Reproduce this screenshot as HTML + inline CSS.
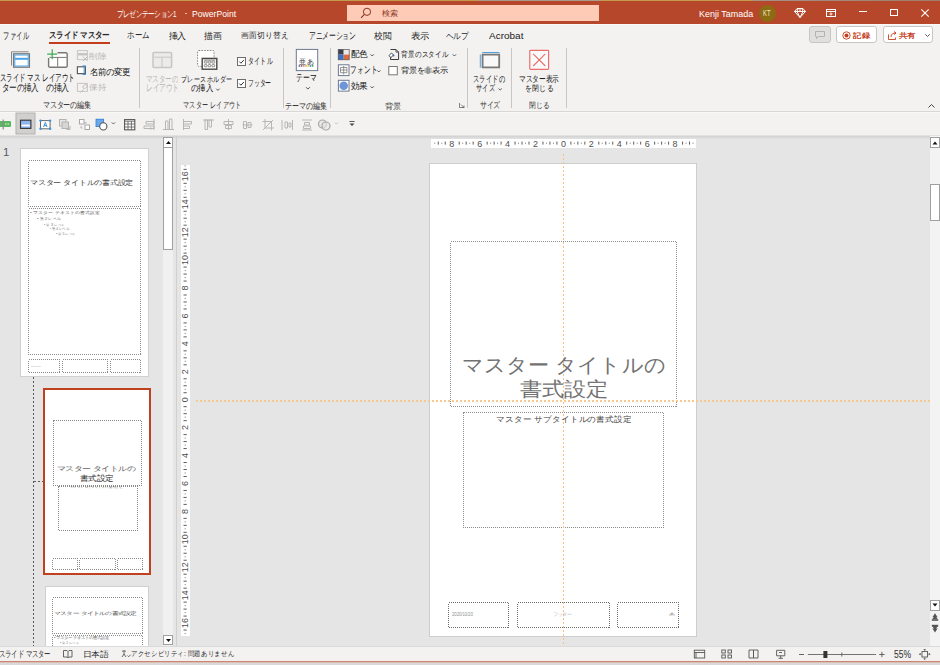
<!DOCTYPE html>
<html lang="ja"><head><meta charset="utf-8"><title>PowerPoint</title>
<style>
html,body{margin:0;padding:0;width:940px;height:665px;overflow:hidden;background:#e5e5e5;font-family:'Liberation Sans',sans-serif}
body{position:relative}
.t{position:absolute;white-space:pre;line-height:1;transform-origin:0 0}
.a{position:absolute;box-sizing:border-box}
svg.a{overflow:visible}

</style></head><body>
<!-- top strip -->
<div class=a style="left:0;top:0;width:940px;height:1px;background:linear-gradient(90deg,#c49a4c 0,#c49a4c 50.8%,#a89c8e 51%,#a89c8e 63.8%,#c49a4c 64%,#c49a4c 80%,#a39488 80.2%,#a07c6a 100%)"></div>
<!-- title bar -->
<div class=a style="left:0;top:1px;width:940px;height:23px;background:#b7472a"></div>
<!-- search box -->
<div class=a style="left:347px;top:5px;width:252px;height:16px;background:#fdcbb6"></div>
<svg class=a style="left:360px;top:7px" width="12" height="12" viewBox="0 0 12 12"><circle cx="7" cy="4.8" r="3.6" fill="none" stroke="#8a3422" stroke-width="1"/><line x1="4.4" y1="7.4" x2="1" y2="10.8" stroke="#8a3422" stroke-width="1.1"/></svg>
<!-- avatar -->
<div class=a style="left:759px;top:4.5px;width:17px;height:17px;border-radius:50%;background:#8d6b12"></div>
<!-- title icons -->
<svg class=a style="left:794px;top:8px" width="12" height="10" viewBox="0 0 12 10"><path d="M3 0.5h6l2.5 3L6 9.5 0.5 3.5z M0.5 3.5h11 M4 0.5l-1 3 3 6 3-6-1-3 M6 0.5v3" fill="none" stroke="#fff" stroke-width="1"/></svg>
<svg class=a style="left:825.5px;top:8.5px" width="10" height="8" viewBox="0 0 10 8"><rect x="0.5" y="0.5" width="9" height="7" fill="none" stroke="#fff" stroke-width="1"/><line x1="0.5" y1="2.5" x2="9.5" y2="2.5" stroke="#fff"/><path d="M5 3.5v3M3.5 5h3" stroke="#fff" stroke-width="0.9"/></svg>
<div class=a style="left:858.5px;top:11px;width:8px;height:1px;background:#fff"></div>
<div class=a style="left:890px;top:8.5px;width:7.5px;height:7.5px;border:1px solid #fff"></div>
<svg class=a style="left:921px;top:8.5px" width="8" height="8" viewBox="0 0 8 8"><path d="M0.3 0.3L7.7 7.7M7.7 0.3L0.3 7.7" stroke="#fff" stroke-width="1.1"/></svg>
<!-- tabs / ribbon bg -->
<div class=a style="left:0;top:24px;width:940px;height:87px;background:#f3f2f1"></div>
<div class=a style="left:0;top:24px;width:940px;height:1px;background:#f9f9f9"></div>
<div class=a style="left:49px;top:42px;width:61px;height:2px;background:#c43e1c"></div>
<!-- share buttons -->
<div class=a style="left:809px;top:26px;width:22px;height:17px;background:#e1dfdd;border:1px solid #c8c6c4;border-radius:3px"></div>
<svg class=a style="left:815px;top:31px" width="10" height="8" viewBox="0 0 10 8"><path d="M0.5 0.5h9v5h-6l-2 2v-2h-1z" fill="none" stroke="#b0aeac" stroke-width="0.9"/></svg>
<div class=a style="left:836px;top:26px;width:41px;height:17px;background:#fff;border:1px solid #c8c6c4;border-radius:3px"></div>
<svg class=a style="left:841.5px;top:31px" width="9" height="9" viewBox="0 0 9 9"><circle cx="4.5" cy="4.5" r="3.7" fill="none" stroke="#c43e1c" stroke-width="0.9"/><circle cx="4.5" cy="4.5" r="2" fill="#c43e1c"/></svg>
<div class=a style="left:882.5px;top:26px;width:50px;height:17px;background:#fff;border:1px solid #c8c6c4;border-radius:3px"></div>
<svg class=a style="left:887.5px;top:31px" width="9" height="9" viewBox="0 0 9 9"><path d="M0.5 3.5v5h7v-2 M3 6c0-3 2-4 5-4 M6 0.5l2 1.5-2 1.5" fill="none" stroke="#c43e1c" stroke-width="0.9"/></svg>
<svg class=a style="left:924.5px;top:34px" width="5" height="3" viewBox="0 0 5 3"><path d="M0.3 0.3l2.2 2.2 2.2-2.2" fill="none" stroke="#444" stroke-width="0.9"/></svg>
<!-- ribbon separators -->
<div class=a style="left:139px;top:48px;width:1px;height:60px;background:#c8c6c4"></div>
<div class=a style="left:283px;top:48px;width:1px;height:60px;background:#c8c6c4"></div>
<div class=a style="left:330px;top:48px;width:1px;height:60px;background:#c8c6c4"></div>
<div class=a style="left:467px;top:48px;width:1px;height:60px;background:#c8c6c4"></div>
<div class=a style="left:511px;top:48px;width:1px;height:60px;background:#c8c6c4"></div>
<div class=a style="left:566px;top:48px;width:1px;height:60px;background:#c8c6c4"></div>
<!-- ribbon bottom -->
<div class=a style="left:0;top:111px;width:940px;height:1px;background:#d9d7d5"></div>
<div class=a style="left:0;top:112px;width:940px;height:1px;background:#f8f8f7"></div>
<!-- collapse chevron -->
<svg class=a style="left:928px;top:104px" width="7" height="4" viewBox="0 0 7 4"><path d="M0.5 3.5l3-3 3 3" fill="none" stroke="#444" stroke-width="1"/></svg>
<!-- toolbar row -->
<div class=a style="left:0;top:113px;width:940px;height:22px;background:#f3f2f1"></div>
<!-- main area -->
<div class=a style="left:0;top:135px;width:940px;height:511px;background:#e5e5e5"></div>
<div class=a style="left:0;top:135px;width:940px;height:4px;background:linear-gradient(#e2e2e2 0,#e2e2e2 25%,#d4d4d4 25%,#d4d4d4 50%,#dadada 50%,#dadada 75%,#e0e0e0 75%)"></div>
<!-- left pane -->
<div class=a style="left:176px;top:136px;width:1px;height:510px;background:#d0d0d0"></div>
<!-- thumbnail scrollbar -->
<div class=a style="left:163px;top:137px;width:10px;height:509px;background:#f0f0f0"></div>
<div class=a style="left:163px;top:137px;width:10px;height:11px;background:#fff;border:1px solid #a0a0a0"></div>
<div class=a style="left:163px;top:147px;width:10px;height:103px;background:#fff;border:1px solid #a0a0a0"></div>
<div class=a style="left:163px;top:635px;width:10px;height:10px;background:#fff;border:1px solid #a0a0a0"></div>
<svg class=a style="left:165.5px;top:140.5px" width="5" height="3" viewBox="0 0 5 3"><path d="M0 3h5L2.5 0z" fill="#111"/></svg>
<svg class=a style="left:165.5px;top:639px" width="5" height="3" viewBox="0 0 5 3"><path d="M0 0h5L2.5 3z" fill="#111"/></svg>
<!-- slide 1 thumb -->
<div class=a style="left:20px;top:148px;width:129px;height:229px;background:#fff;border:1px solid #d0d0d0"></div>
<!-- dashed connector -->
<svg class=a style="left:0;top:0" width="200" height="665" viewBox="0 0 200 665" shape-rendering="crispEdges"><line x1="33.5" y1="377" x2="33.5" y2="646" stroke="#5a5a5a" stroke-width="1" stroke-dasharray="2 2"/><line x1="34" y1="481.5" x2="43" y2="481.5" stroke="#5a5a5a" stroke-width="1" stroke-dasharray="2 2"/></svg>
<!-- slide 2 thumb selected -->
<div class=a style="left:43px;top:388px;width:108px;height:187px;background:#fff;border:2px solid #c0411f"></div>
<!-- slide 3 thumb -->
<div class=a style="left:45px;top:586px;width:104px;height:70px;background:#fff;border:1px solid #d0d0d0"></div>
<svg class=a style="left:0;top:0" width="940" height="665" viewBox="0 0 940 665"><rect x="431" y="139" width="265" height="9" fill="#fff"/><rect x="434.27" y="142.6" width="1" height="1.2" fill="#8c8c8c"/><rect x="437.76" y="141.6" width="1" height="3" fill="#5c5c5c"/><rect x="441.25" y="142.6" width="1" height="1.2" fill="#8c8c8c"/><rect x="444.74" y="141.6" width="1" height="3" fill="#5c5c5c"/><text x="451.72" y="146.5" font-size="9" font-family="Liberation Sans" fill="#505050" text-anchor="middle">8</text><rect x="458.70" y="141.6" width="1" height="3" fill="#5c5c5c"/><rect x="462.19" y="142.6" width="1" height="1.2" fill="#8c8c8c"/><rect x="465.68" y="141.6" width="1" height="3" fill="#5c5c5c"/><rect x="469.17" y="142.6" width="1" height="1.2" fill="#8c8c8c"/><rect x="472.66" y="141.6" width="1" height="3" fill="#5c5c5c"/><text x="479.64" y="146.5" font-size="9" font-family="Liberation Sans" fill="#505050" text-anchor="middle">6</text><rect x="486.62" y="141.6" width="1" height="3" fill="#5c5c5c"/><rect x="490.11" y="142.6" width="1" height="1.2" fill="#8c8c8c"/><rect x="493.60" y="141.6" width="1" height="3" fill="#5c5c5c"/><rect x="497.09" y="142.6" width="1" height="1.2" fill="#8c8c8c"/><rect x="500.58" y="141.6" width="1" height="3" fill="#5c5c5c"/><text x="507.56" y="146.5" font-size="9" font-family="Liberation Sans" fill="#505050" text-anchor="middle">4</text><rect x="514.54" y="141.6" width="1" height="3" fill="#5c5c5c"/><rect x="518.03" y="142.6" width="1" height="1.2" fill="#8c8c8c"/><rect x="521.52" y="141.6" width="1" height="3" fill="#5c5c5c"/><rect x="525.01" y="142.6" width="1" height="1.2" fill="#8c8c8c"/><rect x="528.50" y="141.6" width="1" height="3" fill="#5c5c5c"/><text x="535.48" y="146.5" font-size="9" font-family="Liberation Sans" fill="#505050" text-anchor="middle">2</text><rect x="542.46" y="141.6" width="1" height="3" fill="#5c5c5c"/><rect x="545.95" y="142.6" width="1" height="1.2" fill="#8c8c8c"/><rect x="549.44" y="141.6" width="1" height="3" fill="#5c5c5c"/><rect x="552.93" y="142.6" width="1" height="1.2" fill="#8c8c8c"/><rect x="556.42" y="141.6" width="1" height="3" fill="#5c5c5c"/><text x="563.40" y="146.5" font-size="9" font-family="Liberation Sans" fill="#505050" text-anchor="middle">0</text><rect x="570.38" y="141.6" width="1" height="3" fill="#5c5c5c"/><rect x="573.87" y="142.6" width="1" height="1.2" fill="#8c8c8c"/><rect x="577.36" y="141.6" width="1" height="3" fill="#5c5c5c"/><rect x="580.85" y="142.6" width="1" height="1.2" fill="#8c8c8c"/><rect x="584.34" y="141.6" width="1" height="3" fill="#5c5c5c"/><text x="591.32" y="146.5" font-size="9" font-family="Liberation Sans" fill="#505050" text-anchor="middle">2</text><rect x="598.30" y="141.6" width="1" height="3" fill="#5c5c5c"/><rect x="601.79" y="142.6" width="1" height="1.2" fill="#8c8c8c"/><rect x="605.28" y="141.6" width="1" height="3" fill="#5c5c5c"/><rect x="608.77" y="142.6" width="1" height="1.2" fill="#8c8c8c"/><rect x="612.26" y="141.6" width="1" height="3" fill="#5c5c5c"/><text x="619.24" y="146.5" font-size="9" font-family="Liberation Sans" fill="#505050" text-anchor="middle">4</text><rect x="626.22" y="141.6" width="1" height="3" fill="#5c5c5c"/><rect x="629.71" y="142.6" width="1" height="1.2" fill="#8c8c8c"/><rect x="633.20" y="141.6" width="1" height="3" fill="#5c5c5c"/><rect x="636.69" y="142.6" width="1" height="1.2" fill="#8c8c8c"/><rect x="640.18" y="141.6" width="1" height="3" fill="#5c5c5c"/><text x="647.16" y="146.5" font-size="9" font-family="Liberation Sans" fill="#505050" text-anchor="middle">6</text><rect x="654.14" y="141.6" width="1" height="3" fill="#5c5c5c"/><rect x="657.63" y="142.6" width="1" height="1.2" fill="#8c8c8c"/><rect x="661.12" y="141.6" width="1" height="3" fill="#5c5c5c"/><rect x="664.61" y="142.6" width="1" height="1.2" fill="#8c8c8c"/><rect x="668.10" y="141.6" width="1" height="3" fill="#5c5c5c"/><text x="675.08" y="146.5" font-size="9" font-family="Liberation Sans" fill="#505050" text-anchor="middle">8</text><rect x="682.06" y="141.6" width="1" height="3" fill="#5c5c5c"/><rect x="685.55" y="142.6" width="1" height="1.2" fill="#8c8c8c"/><rect x="689.04" y="141.6" width="1" height="3" fill="#5c5c5c"/><rect x="692.53" y="142.6" width="1" height="1.2" fill="#8c8c8c"/><rect x="181" y="165" width="9" height="471" fill="#fff"/><rect x="184.6" y="165.37" width="1.2" height="1" fill="#8c8c8c"/><rect x="183.5" y="168.86" width="3.2" height="1" fill="#5c5c5c"/><text x="0" y="0" transform="translate(188.3 176.34) rotate(-90)" font-size="9" font-family="Liberation Sans" fill="#505050" text-anchor="middle">16</text><rect x="183.5" y="182.82" width="3.2" height="1" fill="#5c5c5c"/><rect x="184.6" y="186.31" width="1.2" height="1" fill="#8c8c8c"/><rect x="183.5" y="189.80" width="3.2" height="1" fill="#5c5c5c"/><rect x="184.6" y="193.29" width="1.2" height="1" fill="#8c8c8c"/><rect x="183.5" y="196.78" width="3.2" height="1" fill="#5c5c5c"/><text x="0" y="0" transform="translate(188.3 204.26) rotate(-90)" font-size="9" font-family="Liberation Sans" fill="#505050" text-anchor="middle">14</text><rect x="183.5" y="210.74" width="3.2" height="1" fill="#5c5c5c"/><rect x="184.6" y="214.23" width="1.2" height="1" fill="#8c8c8c"/><rect x="183.5" y="217.72" width="3.2" height="1" fill="#5c5c5c"/><rect x="184.6" y="221.21" width="1.2" height="1" fill="#8c8c8c"/><rect x="183.5" y="224.70" width="3.2" height="1" fill="#5c5c5c"/><text x="0" y="0" transform="translate(188.3 232.18) rotate(-90)" font-size="9" font-family="Liberation Sans" fill="#505050" text-anchor="middle">12</text><rect x="183.5" y="238.66" width="3.2" height="1" fill="#5c5c5c"/><rect x="184.6" y="242.15" width="1.2" height="1" fill="#8c8c8c"/><rect x="183.5" y="245.64" width="3.2" height="1" fill="#5c5c5c"/><rect x="184.6" y="249.13" width="1.2" height="1" fill="#8c8c8c"/><rect x="183.5" y="252.62" width="3.2" height="1" fill="#5c5c5c"/><text x="0" y="0" transform="translate(188.3 260.10) rotate(-90)" font-size="9" font-family="Liberation Sans" fill="#505050" text-anchor="middle">10</text><rect x="183.5" y="266.58" width="3.2" height="1" fill="#5c5c5c"/><rect x="184.6" y="270.07" width="1.2" height="1" fill="#8c8c8c"/><rect x="183.5" y="273.56" width="3.2" height="1" fill="#5c5c5c"/><rect x="184.6" y="277.05" width="1.2" height="1" fill="#8c8c8c"/><rect x="183.5" y="280.54" width="3.2" height="1" fill="#5c5c5c"/><text x="0" y="0" transform="translate(188.3 288.02) rotate(-90)" font-size="9" font-family="Liberation Sans" fill="#505050" text-anchor="middle">8</text><rect x="183.5" y="294.50" width="3.2" height="1" fill="#5c5c5c"/><rect x="184.6" y="297.99" width="1.2" height="1" fill="#8c8c8c"/><rect x="183.5" y="301.48" width="3.2" height="1" fill="#5c5c5c"/><rect x="184.6" y="304.97" width="1.2" height="1" fill="#8c8c8c"/><rect x="183.5" y="308.46" width="3.2" height="1" fill="#5c5c5c"/><text x="0" y="0" transform="translate(188.3 315.94) rotate(-90)" font-size="9" font-family="Liberation Sans" fill="#505050" text-anchor="middle">6</text><rect x="183.5" y="322.42" width="3.2" height="1" fill="#5c5c5c"/><rect x="184.6" y="325.91" width="1.2" height="1" fill="#8c8c8c"/><rect x="183.5" y="329.40" width="3.2" height="1" fill="#5c5c5c"/><rect x="184.6" y="332.89" width="1.2" height="1" fill="#8c8c8c"/><rect x="183.5" y="336.38" width="3.2" height="1" fill="#5c5c5c"/><text x="0" y="0" transform="translate(188.3 343.86) rotate(-90)" font-size="9" font-family="Liberation Sans" fill="#505050" text-anchor="middle">4</text><rect x="183.5" y="350.34" width="3.2" height="1" fill="#5c5c5c"/><rect x="184.6" y="353.83" width="1.2" height="1" fill="#8c8c8c"/><rect x="183.5" y="357.32" width="3.2" height="1" fill="#5c5c5c"/><rect x="184.6" y="360.81" width="1.2" height="1" fill="#8c8c8c"/><rect x="183.5" y="364.30" width="3.2" height="1" fill="#5c5c5c"/><text x="0" y="0" transform="translate(188.3 371.78) rotate(-90)" font-size="9" font-family="Liberation Sans" fill="#505050" text-anchor="middle">2</text><rect x="183.5" y="378.26" width="3.2" height="1" fill="#5c5c5c"/><rect x="184.6" y="381.75" width="1.2" height="1" fill="#8c8c8c"/><rect x="183.5" y="385.24" width="3.2" height="1" fill="#5c5c5c"/><rect x="184.6" y="388.73" width="1.2" height="1" fill="#8c8c8c"/><rect x="183.5" y="392.22" width="3.2" height="1" fill="#5c5c5c"/><text x="0" y="0" transform="translate(188.3 399.70) rotate(-90)" font-size="9" font-family="Liberation Sans" fill="#505050" text-anchor="middle">0</text><rect x="183.5" y="406.18" width="3.2" height="1" fill="#5c5c5c"/><rect x="184.6" y="409.67" width="1.2" height="1" fill="#8c8c8c"/><rect x="183.5" y="413.16" width="3.2" height="1" fill="#5c5c5c"/><rect x="184.6" y="416.65" width="1.2" height="1" fill="#8c8c8c"/><rect x="183.5" y="420.14" width="3.2" height="1" fill="#5c5c5c"/><text x="0" y="0" transform="translate(188.3 427.62) rotate(-90)" font-size="9" font-family="Liberation Sans" fill="#505050" text-anchor="middle">2</text><rect x="183.5" y="434.10" width="3.2" height="1" fill="#5c5c5c"/><rect x="184.6" y="437.59" width="1.2" height="1" fill="#8c8c8c"/><rect x="183.5" y="441.08" width="3.2" height="1" fill="#5c5c5c"/><rect x="184.6" y="444.57" width="1.2" height="1" fill="#8c8c8c"/><rect x="183.5" y="448.06" width="3.2" height="1" fill="#5c5c5c"/><text x="0" y="0" transform="translate(188.3 455.54) rotate(-90)" font-size="9" font-family="Liberation Sans" fill="#505050" text-anchor="middle">4</text><rect x="183.5" y="462.02" width="3.2" height="1" fill="#5c5c5c"/><rect x="184.6" y="465.51" width="1.2" height="1" fill="#8c8c8c"/><rect x="183.5" y="469.00" width="3.2" height="1" fill="#5c5c5c"/><rect x="184.6" y="472.49" width="1.2" height="1" fill="#8c8c8c"/><rect x="183.5" y="475.98" width="3.2" height="1" fill="#5c5c5c"/><text x="0" y="0" transform="translate(188.3 483.46) rotate(-90)" font-size="9" font-family="Liberation Sans" fill="#505050" text-anchor="middle">6</text><rect x="183.5" y="489.94" width="3.2" height="1" fill="#5c5c5c"/><rect x="184.6" y="493.43" width="1.2" height="1" fill="#8c8c8c"/><rect x="183.5" y="496.92" width="3.2" height="1" fill="#5c5c5c"/><rect x="184.6" y="500.41" width="1.2" height="1" fill="#8c8c8c"/><rect x="183.5" y="503.90" width="3.2" height="1" fill="#5c5c5c"/><text x="0" y="0" transform="translate(188.3 511.38) rotate(-90)" font-size="9" font-family="Liberation Sans" fill="#505050" text-anchor="middle">8</text><rect x="183.5" y="517.86" width="3.2" height="1" fill="#5c5c5c"/><rect x="184.6" y="521.35" width="1.2" height="1" fill="#8c8c8c"/><rect x="183.5" y="524.84" width="3.2" height="1" fill="#5c5c5c"/><rect x="184.6" y="528.33" width="1.2" height="1" fill="#8c8c8c"/><rect x="183.5" y="531.82" width="3.2" height="1" fill="#5c5c5c"/><text x="0" y="0" transform="translate(188.3 539.30) rotate(-90)" font-size="9" font-family="Liberation Sans" fill="#505050" text-anchor="middle">10</text><rect x="183.5" y="545.78" width="3.2" height="1" fill="#5c5c5c"/><rect x="184.6" y="549.27" width="1.2" height="1" fill="#8c8c8c"/><rect x="183.5" y="552.76" width="3.2" height="1" fill="#5c5c5c"/><rect x="184.6" y="556.25" width="1.2" height="1" fill="#8c8c8c"/><rect x="183.5" y="559.74" width="3.2" height="1" fill="#5c5c5c"/><text x="0" y="0" transform="translate(188.3 567.22) rotate(-90)" font-size="9" font-family="Liberation Sans" fill="#505050" text-anchor="middle">12</text><rect x="183.5" y="573.70" width="3.2" height="1" fill="#5c5c5c"/><rect x="184.6" y="577.19" width="1.2" height="1" fill="#8c8c8c"/><rect x="183.5" y="580.68" width="3.2" height="1" fill="#5c5c5c"/><rect x="184.6" y="584.17" width="1.2" height="1" fill="#8c8c8c"/><rect x="183.5" y="587.66" width="3.2" height="1" fill="#5c5c5c"/><text x="0" y="0" transform="translate(188.3 595.14) rotate(-90)" font-size="9" font-family="Liberation Sans" fill="#505050" text-anchor="middle">14</text><rect x="183.5" y="601.62" width="3.2" height="1" fill="#5c5c5c"/><rect x="184.6" y="605.11" width="1.2" height="1" fill="#8c8c8c"/><rect x="183.5" y="608.60" width="3.2" height="1" fill="#5c5c5c"/><rect x="184.6" y="612.09" width="1.2" height="1" fill="#8c8c8c"/><rect x="183.5" y="615.58" width="3.2" height="1" fill="#5c5c5c"/><text x="0" y="0" transform="translate(188.3 623.06) rotate(-90)" font-size="9" font-family="Liberation Sans" fill="#505050" text-anchor="middle">16</text><rect x="183.5" y="629.54" width="3.2" height="1" fill="#5c5c5c"/><rect x="184.6" y="633.03" width="1.2" height="1" fill="#8c8c8c"/></svg>
<!-- main slide -->
<div class=a style="left:429px;top:163px;width:268px;height:474px;background:#fff;border:1px solid #cdcdcd"></div>
<!-- right scrollbar -->
<div class=a style="left:930px;top:136px;width:10px;height:510px;background:#f3f3f3"></div>
<div class=a style="left:930px;top:137px;width:10px;height:11px;background:#fff;border:1px solid #a0a0a0"></div>
<div class=a style="left:930px;top:184px;width:10px;height:37px;background:#fff;border:1px solid #a0a0a0"></div>
<div class=a style="left:930px;top:600px;width:10px;height:11px;background:#fff;border:1px solid #a0a0a0"></div>

<!-- ===== main slide placeholders ===== -->
<svg class=a style="left:0;top:0" width="940" height="665" viewBox="0 0 940 665" shape-rendering="crispEdges">
<g fill="none" stroke="#8c8c8c" stroke-width="1" stroke-dasharray="1 1">
<rect x="450.5" y="241.5" width="226" height="165"/>
<rect x="463.5" y="412.5" width="200" height="114.5"/>
</g>
<g fill="none" stroke="#6e6e6e" stroke-width="1" stroke-dasharray="1 1">
<rect x="448.5" y="602.5" width="60" height="25"/>
<rect x="517.5" y="602.5" width="92" height="25"/>
<rect x="617.5" y="602.5" width="61" height="25"/>
</g>
<!-- thumb 1 -->
<g fill="none" stroke="#8a8a8a" stroke-width="1" stroke-dasharray="1 1">
<rect x="28.5" y="160.5" width="112" height="46"/>
<rect x="28.5" y="208.5" width="112" height="146"/>
<rect x="28.5" y="359.5" width="31" height="13"/>
<rect x="62.5" y="359.5" width="45" height="13"/>
<rect x="110.5" y="359.5" width="30" height="13"/>
<!-- thumb 2 -->
<rect x="53.5" y="420.5" width="88" height="64.5"/>
<rect x="58.5" y="486.5" width="78.5" height="44"/>
<rect x="52.5" y="558.5" width="25" height="11"/>
<rect x="79.5" y="558.5" width="36" height="11"/>
<rect x="117.5" y="558.5" width="25" height="11"/>
<!-- thumb 3 -->
<rect x="52.5" y="597.5" width="90" height="36"/>
<rect x="52.5" y="635.5" width="90" height="20"/>
</g>
</svg>
<!-- guides -->
<svg class=a style="left:0;top:0" width="940" height="665" viewBox="0 0 940 665" shape-rendering="crispEdges">
<line x1="563.5" y1="154" x2="563.5" y2="646" stroke="#f4c27c" stroke-width="1" stroke-dasharray="2 2"/>
<line x1="196" y1="401" x2="930" y2="401" stroke="#f4ca90" stroke-width="2" stroke-dasharray="2 2"/>
</svg>
<!-- ===== ribbon icons ===== -->
<svg class=a style="left:0;top:0" width="940" height="120" viewBox="0 0 940 120">
<!-- slide master insert -->
<path d="M11.5 65.5V51.8H28.6" fill="none" stroke="#8a8886" stroke-width="1"/>
<rect x="13.6" y="53.8" width="15.8" height="13.4" fill="#fff" stroke="#7a7876" stroke-width="1.3"/>
<rect x="14.8" y="55" width="13.4" height="11" fill="none" stroke="#4da3e6" stroke-width="1"/>
<rect x="15" y="57.8" width="13" height="2" fill="#4da3e6"/>
<!-- layout insert -->
<path d="M57.5 52.8H66a1.2 1.2 0 0 1 1.2 1.2V66a1.2 1.2 0 0 1-1.2 1.2H49.8a1.2 1.2 0 0 1-1.2-1.2V58" fill="#fff" stroke="#7a7876" stroke-width="1.4"/>
<path d="M49.5 57.4H66.6M57.7 57.4V66.5" fill="none" stroke="#7a7876" stroke-width="1"/>
<path d="M52.2 49.2v10M47.2 54.2h10" fill="none" stroke="#3daa55" stroke-width="1.2"/>
<!-- delete (disabled) -->
<rect x="77.4" y="50.6" width="10" height="9" fill="#f3f2f1" stroke="#c8c6c4" stroke-width="1"/>
<rect x="78" y="53" width="9" height="2.5" fill="#c8c6c4"/>
<path d="M83 56.5l4.5 4.5M87.5 56.5L83 61" stroke="#bdbbb9" stroke-width="1"/>
<!-- rename -->
<rect x="77.4" y="66.8" width="8" height="6.8" fill="#fff" stroke="#5f5d5b" stroke-width="1.2"/>
<path d="M82.6 65.9h1.6m0 0h1.6M84.2 65.9V74.5M82.6 74.5h3.2" fill="none" stroke="#3a8ee0" stroke-width="1"/>
<!-- keep (disabled) -->
<rect x="77.4" y="83.4" width="10" height="8" fill="#f3f2f1" stroke="#c8c6c4" stroke-width="1"/>
<path d="M80.5 92.5l3-3M82.5 87l3-3 2 2-3 3z" fill="none" stroke="#bdbbb9" stroke-width="1"/>
<!-- master layout (disabled) -->
<rect x="153" y="52.6" width="18.6" height="14.8" rx="1" fill="#edebe9" stroke="#c8c6c4" stroke-width="1.5"/>
<path d="M153.5 57.2h17.6M162 57.2v10" fill="none" stroke="#c8c6c4" stroke-width="1"/>
<!-- placeholder insert -->
<rect x="197.6" y="50.5" width="16.4" height="15.8" rx="1" fill="#fff" stroke="#8a8886" stroke-width="1" stroke-dasharray="1.6 1.2"/>
<rect x="202.2" y="58.4" width="14.6" height="10.8" fill="#fff" stroke="#4a4846" stroke-width="1.4"/>
<g fill="none" stroke="#6f6d6b" stroke-width="0.8">
<rect x="204.3" y="61" width="2.8" height="2.2" rx="0.8"/><rect x="208.1" y="61" width="2.8" height="2.2" rx="0.8"/><rect x="211.9" y="61" width="2.8" height="2.2" rx="0.8"/>
<rect x="204.3" y="64.6" width="2.8" height="2.2" rx="0.8"/><rect x="208.1" y="64.6" width="2.8" height="2.2" rx="0.8"/><rect x="211.9" y="64.6" width="2.8" height="2.2" rx="0.8"/>
<path d="M203.8 60h11.5"/>
</g>
<!-- checkboxes -->
<rect x="237.5" y="57.5" width="8" height="8" fill="#fff" stroke="#6f6d6b" stroke-width="1"/>
<path d="M239.3 61.6l1.6 1.6 3-3.2" fill="none" stroke="#323130" stroke-width="1"/>
<rect x="237.5" y="79.5" width="8" height="8" fill="#fff" stroke="#6f6d6b" stroke-width="1"/>
<path d="M239.3 83.6l1.6 1.6 3-3.2" fill="none" stroke="#323130" stroke-width="1"/>
<rect x="388.8" y="66.5" width="8.5" height="8.3" fill="#fff" stroke="#7a7876" stroke-width="1"/>
<!-- theme -->
<rect x="296.3" y="49.4" width="21.4" height="21.2" fill="#fff" stroke="#6d7890" stroke-width="1"/>
<text x="299.2" y="63.6" font-size="7.4" font-family="Liberation Sans" fill="#3a3a3a">亜</text>
<text x="307.4" y="63.6" font-size="6.6" font-family="Liberation Sans" fill="#3a3a3a">あ</text>
<g>
<circle cx="299.4" cy="65.9" r="0.9" fill="#3f6fc0"/><circle cx="301.6" cy="65.9" r="0.9" fill="#d8403a"/><circle cx="303.8" cy="65.9" r="0.9" fill="#9aa0a6"/><circle cx="306" cy="65.9" r="0.9" fill="#f2a33a"/><circle cx="308.2" cy="65.9" r="0.9" fill="#f2c040"/><circle cx="310.4" cy="65.9" r="0.9" fill="#3a86d0"/><circle cx="312.6" cy="65.9" r="0.9" fill="#3faa55"/>
</g>
<!-- color scheme -->
<rect x="338.2" y="49.4" width="5.5" height="5.2" fill="#3b3f48"/>
<rect x="343.7" y="49.4" width="5.5" height="5.2" fill="#e8e8ea"/>
<rect x="338.2" y="54.6" width="5.5" height="5.2" fill="#3a72c4"/>
<rect x="343.7" y="54.6" width="5.5" height="5.2" fill="#df6a40"/>
<rect x="338.2" y="49.4" width="11" height="10.4" fill="none" stroke="#555" stroke-width="0.7"/>
<!-- font -->
<rect x="338.4" y="64.8" width="10.6" height="10.8" fill="#fff" stroke="#6d7890" stroke-width="1"/>
<path d="M340.5 67.5h6.4v5.2h-6.4zM343.7 66v8.5M340.5 70h6.4" fill="none" stroke="#7a7a7a" stroke-width="0.8"/>
<!-- effects -->
<rect x="338.4" y="80.3" width="10.6" height="10.8" fill="#fff" stroke="#6d7890" stroke-width="1"/>
<circle cx="343.7" cy="85.7" r="4.3" fill="#6e95d8"/>
<!-- background style -->
<path d="M390.5 49.5h5.5l2.6 2.6v7.4h-8.1V55" fill="none" stroke="#3a3a3a" stroke-width="1"/>
<path d="M396 49.5v2.6h2.6" fill="none" stroke="#3a3a3a" stroke-width="0.8"/>
<path d="M391.5 53l-2.6 2.6 2 2 2.6-2.6z" fill="#fff" stroke="#3a3a3a" stroke-width="0.9"/>
<circle cx="393.6" cy="55.6" r="0.9" fill="#2a6fd0"/>
<!-- slide size -->
<rect x="482.6" y="54.6" width="16.6" height="12.8" fill="#f8f8f8" stroke="#7a7876" stroke-width="1.8"/>
<path d="M482.3 52.5h17.2M480.3 54.5v13.2" fill="none" stroke="#3a96e0" stroke-width="0.9"/>
<!-- close master -->
<rect x="529.8" y="50.3" width="18.8" height="19" rx="0.8" fill="#fafafa" stroke="#e9706a" stroke-width="1.2"/>
<path d="M533.2 53.8L545.3 66M545.3 53.8L533.2 66" stroke="#e9706a" stroke-width="1.1"/>
<!-- chevrons -->
<g fill="none" stroke="#444" stroke-width="0.9">
<path d="M216.2 88.7l1.7 1.7 1.7-1.7"/>
<path d="M306 87.2l1.9 1.9 1.9-1.9"/>
<path d="M370.6 54.4l1.6 1.6 1.6-1.6"/>
<path d="M377.2 70.4l1.6 1.6 1.6-1.6"/>
<path d="M370.6 86.4l1.6 1.6 1.6-1.6"/>
<path d="M452.8 54.4l1.6 1.6 1.6-1.6"/>
<path d="M498.6 88.5l1.6 1.6 1.6-1.6"/>
</g>
<!-- dialog launcher -->
<path d="M459.5 103v4.5h4.5M461 104.5l3 3M464 105.5v2h-2" fill="none" stroke="#666" stroke-width="0.8"/>
</svg>
<!-- ===== toolbar row icons ===== -->
<svg class=a style="left:0;top:110px" width="370" height="26" viewBox="0 110 370 26">
<!-- green ruler-ish -->
<rect x="-1" y="121" width="12" height="6" rx="1" fill="#5cb860"/>
<rect x="2.6" y="119.5" width="1.2" height="10" fill="#8a8a8a"/>
<path d="M5 124h1.5M7.5 124h1.5" stroke="#fff" stroke-width="0.8"/>
<!-- selected button -->
<rect x="16" y="113" width="19" height="21" fill="#d2d0ce" stroke="#b3b0ad" stroke-width="1"/>
<rect x="20.5" y="120.2" width="10.4" height="8.2" fill="#8fb4ee" stroke="#333" stroke-width="1.1"/>
<rect x="21.5" y="124.6" width="8.4" height="1.8" fill="#fff"/>
<!-- text box -->
<rect x="40.5" y="120.6" width="9.6" height="8.2" fill="#fff" stroke="#6a6a6a" stroke-width="1"/>
<circle cx="40.5" cy="120.6" r="1.2" fill="#3d93e0"/><circle cx="50.1" cy="120.6" r="1.2" fill="#3d93e0"/><circle cx="40.5" cy="128.8" r="1.2" fill="#3d93e0"/><circle cx="50.1" cy="128.8" r="1.2" fill="#3d93e0"/>
<path d="M43.6 127l1.7-4.6 1.7 4.6M44.2 125.6h2.2" fill="none" stroke="#3d93e0" stroke-width="1"/>
<!-- group -->
<rect x="59.5" y="119.5" width="6.5" height="6.5" fill="#e8e6e4" stroke="#b5b3b1" stroke-width="1"/>
<rect x="62" y="122" width="6.5" height="6.5" fill="#d8d6d4" stroke="#b5b3b1" stroke-width="1"/>
<path d="M70 126v3.5h-3.5" fill="none" stroke="#b5b3b1" stroke-width="1"/>
<!-- ungroup -->
<rect x="79.5" y="119.5" width="4.5" height="4.5" fill="#fff" stroke="#a9a7a5" stroke-width="1"/>
<rect x="85" y="125" width="4.5" height="4.5" fill="#fff" stroke="#a9a7a5" stroke-width="1"/>
<path d="M84.5 122.5h1.5v1.5M81 126v2h1.5" fill="none" stroke="#a9a7a5" stroke-width="0.8"/>
<!-- shape -->
<rect x="96" y="119.2" width="7.6" height="7.4" fill="#6aa9ea" stroke="#2d7ed4" stroke-width="0.8"/>
<circle cx="103.3" cy="126.4" r="3.6" fill="#fff" stroke="#555" stroke-width="1.1"/>
<path d="M111.8 122.4l1.6 1.6 1.6-1.6" fill="none" stroke="#555" stroke-width="0.9"/>
<!-- table -->
<rect x="124.6" y="119.6" width="10.2" height="10.2" fill="#fff" stroke="#555" stroke-width="1.1"/>
<path d="M124.6 121.2h10.2M124.6 124h10.2M124.6 127h10.2M128 121v8.8M131.4 121v8.8" fill="none" stroke="#555" stroke-width="0.8"/>
<g fill="none" stroke="#b8b6b4" stroke-width="1">
<!-- align right -->
<path d="M154 119v11M146 121.5h8v2.5h-8zM144 126h10v2.5h-10z"/>
<path d="M150 129.5l2-1 -2-1" stroke-width="0.7"/>
<!-- align bottom -->
<path d="M163 129.5h11M165.5 121v8.5h2.5v-8.5zM169.5 119v10.5h2.5v-10.5z"/>
<!-- align left -->
<path d="M183.5 119v11M183.5 121.5h8v2.5h-8zM183.5 126h6v2.5h-6z"/>
<!-- align top -->
<path d="M203 120h11M205 120v9.5h2.5V120zM209 120v7h2.5v-7z"/>
<!-- align center -->
<path d="M228.5 119v11M224 121.5h9v3h-9zM225.5 125.5h6v3h-6z"/>
<!-- align middle -->
<path d="M242.5 125h10M243.5 121.5h3v7h-3zM248 122.5h3v5h-3z"/>
<!-- crop -->
<path d="M265 119v9h9M262.5 121.5h9v9M263 130l10-10"/>
<!-- distribute H -->
<path d="M282 120v10M292.5 120v10M285 122h2.5v6H285zM289 123h2v4h-2z"/>
<!-- distribute V -->
<path d="M302 120h10M302 130h10M304.5 122.5h5v2.5h-5zM303.5 126h7v2.5h-7z"/>
</g>
<!-- merge shapes -->
<circle cx="322.5" cy="124" r="4" fill="#e8e6e4" stroke="#a9a7a5" stroke-width="1.2"/>
<circle cx="326" cy="126" r="4" fill="#e8e6e4" fill-opacity="0.6" stroke="#a9a7a5" stroke-width="1.2"/>
<path d="M335 122.6l1.5 1.5 1.5-1.5" fill="none" stroke="#b8b6b4" stroke-width="0.8"/>
<!-- customize -->
<path d="M349.5 121.5h5" stroke="#444" stroke-width="0.9"/>
<path d="M349.5 123.5l2.5 2.5 2.5-2.5z" fill="#444"/>
</svg>
<!-- status bar -->
<div class=a style="left:0;top:646px;width:940px;height:1px;background:#dadada"></div>
<div class=a style="left:0;top:647px;width:940px;height:14px;background:#f3f2f1"></div>
<div class=a style="left:0;top:661px;width:940px;height:1px;background:#cc8572"></div><div class=a style="left:0;top:662px;width:940px;height:1px;background:#dcc0b8"></div>
<div class=a style="left:0;top:663px;width:940px;height:2px;background:#d9d9d9"></div>
<!-- ===== status bar icons ===== -->
<svg class=a style="left:0;top:640px" width="940" height="25" viewBox="0 640 940 25">
<g fill="none" stroke="#555" stroke-width="0.9">
<!-- book -->
<path d="M63.5 650.5h3.5l1 1 1-1h3v6.5h-3l-1 0.8-1-0.8h-3.5zM68 651.5v6"/>
<!-- accessibility -->
<path d="M122 651.5c1-1 3-1 4 0M124 651v3l-2 3M124 654l2 3M127.5 655.5l1.2 1.2 2-2"/>
<!-- normal view -->
<rect x="694.3" y="650.2" width="10.4" height="7.8"/>
<path d="M694.3 652.5h10.4M696 652.5v5.5"/>
<!-- slide sorter -->
<rect x="721.8" y="650" width="3.5" height="3"/><rect x="728" y="650" width="3.5" height="3"/>
<rect x="721.8" y="655" width="3.5" height="3"/><rect x="728" y="655" width="3.5" height="3"/>
<!-- reading view -->
<path d="M749 650v8h4.5v-8zM753.5 650v8H758v-8z"/>
<!-- slide show -->
<path d="M776.6 650.3h8.2v5.5h-8.2zM780.7 655.8v2.5M778.5 658.3h4.4M779 652.5h3"/>
<!-- fit -->
<rect x="922" y="651.5" width="5.5" height="5.5"/>
<path d="M924.7 649.3v1.5M924.7 657.7v1.5M919.5 654.2h1.5M928.3 654.2h1.5M923.7 650l1-1 1 1M923.7 658.5l1 1 1-1M920.5 653.2l-1 1 1 1M929 653.2l1 1-1 1"/>
</g>
<path d="M799 654.5h5M879.2 654.5h5.4M881.9 651.8v5.4" stroke="#555" stroke-width="0.9"/>
<rect x="807.8" y="654" width="68.2" height="0.9" fill="#666"/>
<rect x="841.3" y="652.5" width="1" height="4" fill="#666"/>
<rect x="823.4" y="651" width="4" height="7" fill="#333"/>
</svg>
<!-- right scrollbar arrows -->
<svg class=a style="left:925px;top:136px" width="15" height="500" viewBox="925 136 15 500">
<path d="M932.5 144.5h5L935 141.5z" fill="#111"/>
<path d="M932.5 603.5h5l-2.5 3z" fill="#111"/>
<path d="M932.4 617.2l2.6-4 2.6 4zM931.8 619.6l3.2-3.6 3.2 3.6z" fill="#555"/>
<rect x="931.8" y="619.4" width="6.4" height="1.4" fill="#555"/>
<path d="M932.4 628.4l2.6 4 2.6-4zM931.8 626l3.2 3.6 3.2-3.6z" fill="#555"/>
<rect x="931.8" y="624.8" width="6.4" height="1.4" fill="#555"/>
</svg>

<div class=t style="font-size:11px;font-weight:400;color:#ffffff;left:116.68px;top:9.94px;transform:scale(0.5669,0.7753)">プレゼンテーション1</div><div class=t style="font-size:11px;font-weight:400;color:#ffffff;left:184.50px;top:7.20px;transform:scale(0.5000,1.0000)">-</div><div class=t style="font-size:11px;font-weight:400;color:#ffffff;left:191.72px;top:10.34px;transform:scale(0.7851,0.7493)">PowerPoint</div><div class=t style="font-size:11px;font-weight:400;color:#8a3422;left:381.70px;top:8.50px;transform:scale(0.7409,0.7364)">検索</div><div class=t style="font-size:11px;font-weight:400;color:#ffffff;left:698.73px;top:9.53px;transform:scale(0.8159,0.7886)">Kenji Tamada</div><div class=t style="font-size:8px;font-weight:400;color:#f0e8d0;left:763.45px;top:9.62px;transform:scale(0.7290,1.0251)">KT</div><div class=t style="font-size:11px;font-weight:400;color:#1a1a1a;left:2.87px;top:30.40px;transform:scale(0.5927,0.9470)">ファイル</div><div class=t style="font-size:11px;font-weight:700;color:#262626;left:49.03px;top:31.12px;transform:scale(0.6665,0.7979)">スライド マスター</div><div class=t style="font-size:11px;font-weight:400;color:#1a1a1a;left:127.00px;top:31.17px;transform:scale(0.6875,0.8333)">ホーム</div><div class=t style="font-size:11px;font-weight:400;color:#1a1a1a;left:168.50px;top:31.87px;transform:scale(0.7696,0.7773)">挿入</div><div class=t style="font-size:11px;font-weight:400;color:#1a1a1a;left:204.00px;top:31.43px;transform:scale(0.8246,0.8371)">描画</div><div class=t style="font-size:11px;font-weight:400;color:#1a1a1a;left:240.79px;top:31.15px;transform:scale(0.7187,0.7429)">画面切り替え</div><div class=t style="font-size:11px;font-weight:400;color:#1a1a1a;left:308.99px;top:30.63px;transform:scale(0.6076,0.8889)">アニメーション</div><div class=t style="font-size:11px;font-weight:400;color:#1a1a1a;left:374.31px;top:31.28px;transform:scale(0.8192,0.8449)">校閲</div><div class=t style="font-size:11px;font-weight:400;color:#1a1a1a;left:411.00px;top:31.50px;transform:scale(0.8182,0.7727)">表示</div><div class=t style="font-size:11px;font-weight:400;color:#1a1a1a;left:446.00px;top:31.80px;transform:scale(0.6818,0.8000)">ヘルプ</div><div class=t style="font-size:11px;font-weight:400;color:#1a1a1a;left:489.10px;top:31.21px;transform:scale(0.9079,0.8875)">Acrobat</div><div class=t style="font-size:11px;font-weight:700;color:#c43e1c;left:852.90px;top:32.17px;transform:scale(0.7864,0.6667)">記録</div><div class=t style="font-size:11px;font-weight:700;color:#c43e1c;left:898.54px;top:32.48px;transform:scale(0.7569,0.6256)">共有</div><div class=t style="font-size:11px;font-weight:400;color:#b8b6b4;left:89.40px;top:51.50px;transform:scale(0.7773,0.7273)">削除</div><div class=t style="font-size:11px;font-weight:400;color:#141414;left:89.63px;top:67.54px;transform:scale(0.7348,0.7806)">名前の変更</div><div class=t style="font-size:11px;font-weight:400;color:#b8b6b4;left:89.46px;top:83.35px;transform:scale(0.7800,0.7273)">保持</div><div class=t style="font-size:11px;font-weight:400;color:#141414;left:0.00px;top:72.74px;transform:scale(0.5821,0.9096)">スライド マス</div><div class=t style="font-size:11px;font-weight:400;color:#141414;left:1.82px;top:83.00px;transform:scale(0.6698,0.8852)">ターの挿入</div><div class=t style="font-size:11px;font-weight:400;color:#141414;left:42.15px;top:73.15px;transform:scale(0.5968,0.9131)">レイアウト</div><div class=t style="font-size:11px;font-weight:400;color:#141414;left:46.00px;top:83.00px;transform:scale(0.6970,0.8691)">の挿入</div><div class=t style="font-size:11px;font-weight:400;color:#333333;left:43.09px;top:100.53px;transform:scale(0.6211,0.7900)">マスターの編集</div><div class=t style="font-size:11px;font-weight:400;color:#b8b6b4;left:146.06px;top:74.84px;transform:scale(0.5811,0.8000)">マスターの</div><div class=t style="font-size:11px;font-weight:400;color:#b8b6b4;left:146.41px;top:83.12px;transform:scale(0.5936,0.8822)">レイアウト</div><div class=t style="font-size:11px;font-weight:400;color:#141414;left:181.16px;top:75.00px;transform:scale(0.5840,0.7714)">プレースホルダー</div><div class=t style="font-size:11px;font-weight:400;color:#141414;left:191.00px;top:84.00px;transform:scale(0.6789,0.8281)">の挿入</div><div class=t style="font-size:11px;font-weight:400;color:#141414;left:247.88px;top:56.43px;transform:scale(0.5613,0.8505)">タイトル</div><div class=t style="font-size:11px;font-weight:400;color:#141414;left:248.48px;top:78.70px;transform:scale(0.5238,0.8000)">フッター</div><div class=t style="font-size:11px;font-weight:400;color:#333333;left:182.85px;top:100.30px;transform:scale(0.5758,0.8486)">マスター レイアウト</div><div class=t style="font-size:11px;font-weight:400;color:#141414;left:296.37px;top:73.07px;transform:scale(0.6258,0.9333)">テーマ</div><div class=t style="font-size:11px;font-weight:400;color:#333333;left:285.16px;top:101.53px;transform:scale(0.6446,0.8224)">テーマの編集</div><div class=t style="font-size:11px;font-weight:400;color:#141414;left:350.70px;top:50.00px;transform:scale(0.7409,0.7727)">配色</div><div class=t style="font-size:11px;font-weight:400;color:#141414;left:350.37px;top:64.61px;transform:scale(0.6264,0.9441)">フォント</div><div class=t style="font-size:11px;font-weight:400;color:#141414;left:350.70px;top:82.00px;transform:scale(0.7409,0.7727)">効果</div><div class=t style="font-size:11px;font-weight:400;color:#141414;left:401.00px;top:50.33px;transform:scale(0.6234,0.7608)">背景のスタイル</div><div class=t style="font-size:11px;font-weight:400;color:#141414;left:401.00px;top:66.76px;transform:scale(0.7121,0.6844)">背景を非表示</div><div class=t style="font-size:11px;font-weight:400;color:#333333;left:385.00px;top:102.13px;transform:scale(0.7609,0.7344)">背景</div><div class=t style="font-size:11px;font-weight:400;color:#141414;left:473.42px;top:74.20px;transform:scale(0.5829,0.8422)">スライドの</div><div class=t style="font-size:11px;font-weight:400;color:#141414;left:476.00px;top:83.40px;transform:scale(0.5808,0.8553)">サイズ</div><div class=t style="font-size:11px;font-weight:400;color:#333333;left:480.23px;top:101.00px;transform:scale(0.5968,0.7758)">サイズ</div><div class=t style="font-size:11px;font-weight:400;color:#141414;left:518.83px;top:74.60px;transform:scale(0.6065,0.8107)">マスター表示</div><div class=t style="font-size:11px;font-weight:400;color:#141414;left:524.85px;top:84.00px;transform:scale(0.6548,0.7636)">を閉じる</div><div class=t style="font-size:11px;font-weight:400;color:#333333;left:529.00px;top:101.26px;transform:scale(0.6162,0.7258)">閉じる</div><div class=t style="font-size:11px;font-weight:400;color:#2e2e2e;left:-0.56px;top:650.04px;transform:scale(0.5637,0.7950)">スライド マスター</div><div class=t style="font-size:11px;font-weight:400;color:#2e2e2e;left:83.30px;top:650.55px;transform:scale(0.7646,0.6855)">日本語</div><div class=t style="font-size:11px;font-weight:400;color:#2e2e2e;left:131.40px;top:650.14px;transform:scale(0.6030,0.6623)">アクセシビリティ: 問題ありません</div><div class=t style="font-size:11px;font-weight:400;color:#2e2e2e;left:893.88px;top:649.05px;transform:scale(0.7725,0.9520)">55%</div><div class=t style="font-size:11px;font-weight:400;color:#5a5a5a;left:2.76px;top:147.05px;transform:scale(1.0400,0.9500)">1</div><div class=t style="font-size:24px;font-weight:300;color:#727272;left:461.82px;top:355.33px;transform:scale(0.8829,0.8364)">マスター タイトルの</div><div class=t style="font-size:24px;font-weight:300;color:#727272;left:520.00px;top:378.70px;transform:scale(0.9200,0.8292)">書式設定</div><div class=t style="font-size:11px;font-weight:400;color:#404040;left:495.89px;top:414.70px;transform:scale(0.8090,0.7545)">マスター サブタイトルの書式設定</div><div class=t style="font-size:8px;font-weight:400;color:#b0b0b0;left:553.16px;top:613.09px;transform:scale(0.5862,0.5714)">フッター</div><div class=t style="font-size:8px;font-weight:400;color:#909090;left:452.00px;top:612.06px;transform:scale(0.5250,0.6819)">2020/10/20</div><div class=t style="font-size:8px;font-weight:400;color:#909090;left:669.00px;top:612.10px;transform:scale(0.5980,0.6755)">‹#›</div><div class=t style="font-size:11px;font-weight:400;color:#3a3a3a;left:30.15px;top:179.22px;transform:scale(0.7066,0.6155)">マスター タイトルの書式設定</div><div class=t style="font-size:6px;font-weight:400;color:#555;left:30.31px;top:210.86px;transform:scale(0.8350,0.6899)">• マスター テキストの書式設定</div><div class=t style="font-size:5px;font-weight:400;color:#666;left:36.72px;top:216.58px;transform:scale(0.8331,0.8630)">• 第 2 レベル</div><div class=t style="font-size:5px;font-weight:400;color:#777;left:43.60px;top:222.70px;transform:scale(0.7326,0.6775)">• 第 3 レベル</div><div class=t style="font-size:5px;font-weight:400;color:#777;left:49.90px;top:227.20px;transform:scale(0.6621,0.7500)">• 第 4 レベル</div><div class=t style="font-size:5px;font-weight:400;color:#777;left:56.33px;top:231.84px;transform:scale(0.6843,0.6319)">• 第 5 レベル</div><div class=t style="font-size:5px;font-weight:400;color:#aaa;left:31.20px;top:365.30px;transform:scale(0.3920,0.4250)">2020/10/20</div><div class=t style="font-size:11px;font-weight:400;color:#5e5e5e;left:57.12px;top:465.86px;transform:scale(0.7639,0.6000)">マスター タイトルの</div><div class=t style="font-size:11px;font-weight:400;color:#1e1e1e;left:79.54px;top:474.70px;transform:scale(0.7710,0.7133)">書式設定</div><div class=t style="font-size:5px;font-weight:400;color:#777;left:70.33px;top:485.80px;transform:scale(0.6840,0.4291)">マスター サブタイトルの書式設定</div><div class=t style="font-size:9px;font-weight:400;color:#4a4a4a;left:54.00px;top:611.00px;transform:scale(0.6889,0.5152)">マスター タイトルの書式設定</div><div class=t style="font-size:6px;font-weight:400;color:#666;left:54.30px;top:636.20px;transform:scale(0.6530,0.6000)">• マスター テキストの書式設定</div><div class=t style="font-size:5px;font-weight:400;color:#777;left:59.60px;top:640.90px;transform:scale(0.6586,0.6250)">• 第 2 レベル</div>
</body></html>
